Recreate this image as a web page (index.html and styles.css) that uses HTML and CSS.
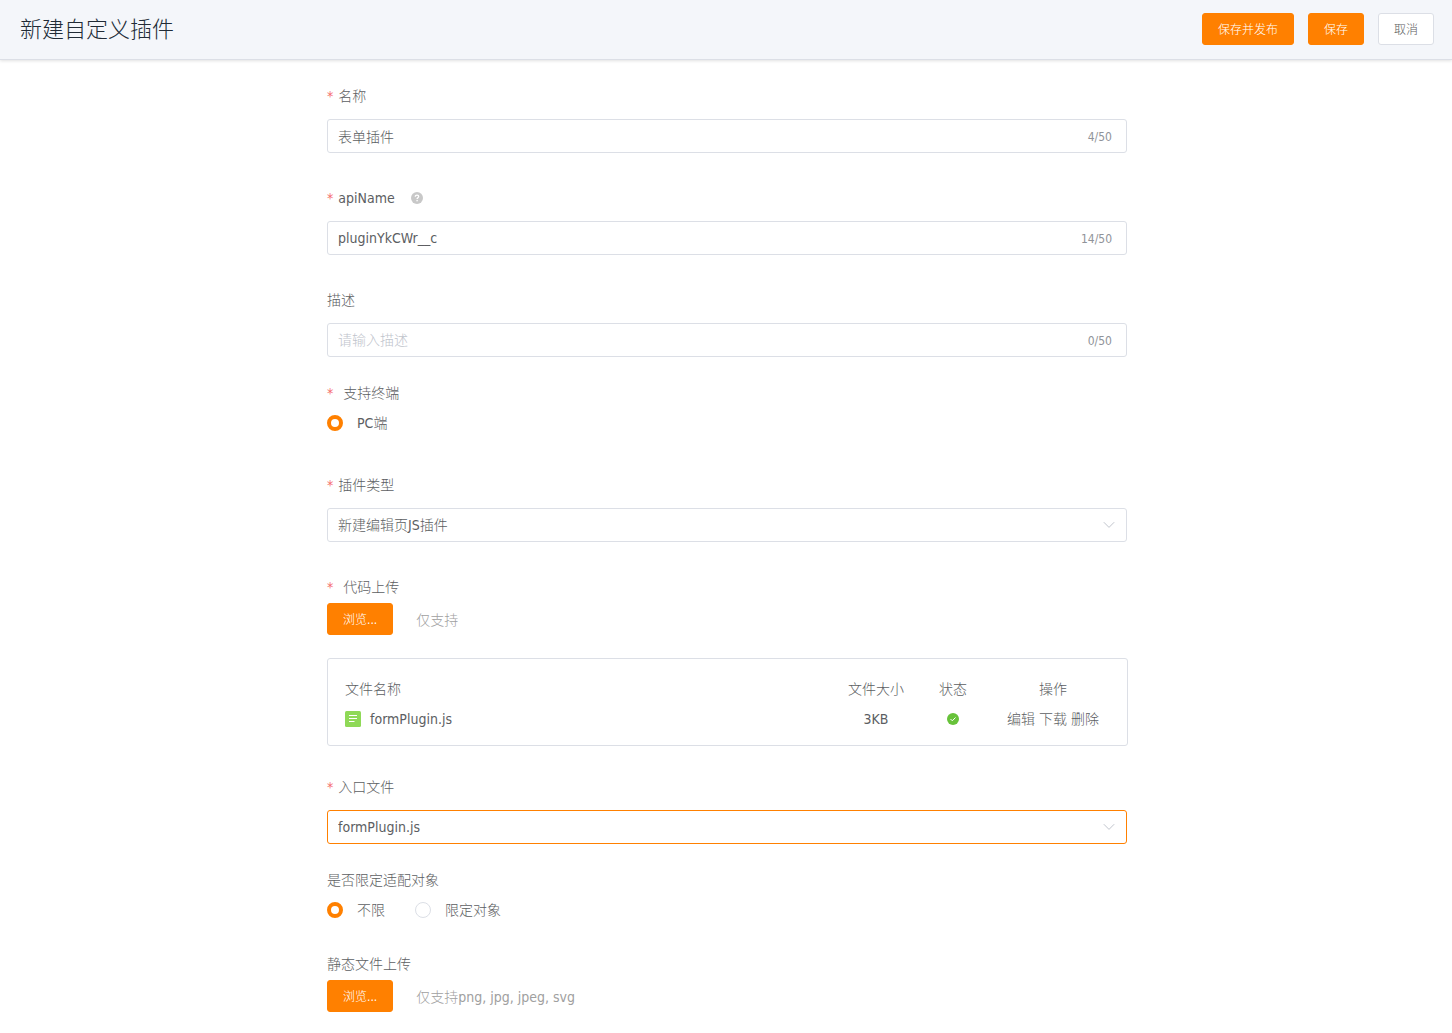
FILE: index.html
```html
<!DOCTYPE html>
<html lang="zh-CN">
<head>
<meta charset="utf-8">
<meta name="viewport" content="width=device-width, initial-scale=1">
<title>新建自定义插件</title>
<link rel="stylesheet" href="styles.css">
</head>
<body>
<header class="topbar">
  <h1 class="topbar-title">新建自定义插件</h1>
  <div class="topbar-actions">
    <button class="btn btn-primary" type="submit" form="plugin-form">保存并发布</button>
    <button class="btn btn-primary" type="button">保存</button>
    <button class="btn btn-plain" type="button">取消</button>
  </div>
</header>
<main class="page">
  <form class="form" id="plugin-form">
    <div class="field">
      <label class="label required" for="name">名称</label>
      <div class="box">
        <input class="control" id="name" type="text" maxlength="50" value="表单插件">
        <span class="counter">4/50</span>
      </div>
    </div>
    <div class="field">
      <div class="label-row">
        <label class="label required" for="api-name">apiName</label>
        <svg class="help" viewBox="0 0 12 12" role="img" aria-label="帮助">
          <circle cx="6" cy="6" r="6" fill="#c8c8c8"/>
          <path d="M4.3 4.8C4.3 3.7 5 3.1 6 3.1s1.7.6 1.7 1.5c0 1.1-1.6 1.2-1.6 2.4" fill="none" stroke="#fff" stroke-width="1.3"/>
          <rect x="5.4" y="7.9" width="1.4" height="1.4" fill="#fff"/>
        </svg>
      </div>
      <div class="box">
        <input class="control" id="api-name" type="text" maxlength="50" value="pluginYkCWr__c">
        <span class="counter">14/50</span>
      </div>
    </div>
    <div class="field field-close">
      <label class="label" for="desc">描述</label>
      <div class="box">
        <input class="control" id="desc" type="text" maxlength="50" placeholder="请输入描述">
        <span class="counter">0/50</span>
      </div>
    </div>
    <fieldset class="group">
      <legend class="label required required-wide">支持终端</legend>
      <div class="radios">
        <label class="choice"><input class="radio" type="radio" name="terminal" checked>PC端</label>
      </div>
    </fieldset>
    <div class="field">
      <label class="label required" for="type">插件类型</label>
      <div class="box box-select">
        <select class="control" id="type"><option>新建编辑页JS插件</option></select>
        <svg class="chevron" viewBox="0 0 12 8" aria-hidden="true"><path d="M.8 1.2 6 6.4l5.200-5.200" fill="none" stroke="#c0c4cc" stroke-width="1"/></svg>
      </div>
    </div>
    <section class="upload">
      <h2 class="label required required-wide">代码上传</h2>
      <div class="upload-row">
        <button class="btn btn-primary" type="button">浏览...</button>
        <span class="hint">仅支持</span>
      </div>
    </section>
    <div class="files">
      <table class="file-table">
        <thead>
          <tr><th class="col-name">文件名称</th><th class="col-size">文件大小</th><th class="col-state">状态</th><th class="col-ops">操作</th></tr>
        </thead>
        <tbody>
          <tr>
            <td class="col-name">
              <div class="file">
                <svg class="file-icon" viewBox="0 0 16 16" aria-hidden="true"><rect width="16" height="16" rx="1.500" fill="#8fd957"/><path d="M4 4.500h8M4 7.500h8M4 10.500h5.500" stroke="#fff" stroke-width="1"/></svg>
                formPlugin.js
              </div>
            </td>
            <td>3KB</td>
            <td><svg class="state-icon" viewBox="0 0 12 12" role="img" aria-label="成功"><circle cx="6" cy="6" r="6" fill="#67c23a"/><path d="m3.500 6 1.800 1.800 3.200-3.300" fill="none" stroke="#fff" stroke-width="1"/></svg></td>
            <td><a class="op" href="#edit">编辑</a> <a class="op" href="#download">下载</a> <a class="op" href="#delete">删除</a></td>
          </tr>
        </tbody>
      </table>
    </div>
    <div class="field field-close">
      <label class="label required" for="entry">入口文件</label>
      <div class="box box-select box-active">
        <select class="control" id="entry"><option>formPlugin.js</option></select>
        <svg class="chevron" viewBox="0 0 12 8" aria-hidden="true"><path d="M.8 1.200 6 6.400l5.200-5.200" fill="none" stroke="#c0c4cc" stroke-width="1"/></svg>
      </div>
    </div>
    <fieldset class="group group-close">
      <legend class="label">是否限定适配对象</legend>
      <div class="radios">
        <label class="choice"><input class="radio" type="radio" name="scope" checked>不限</label>
        <label class="choice"><input class="radio" type="radio" name="scope">限定对象</label>
      </div>
    </fieldset>
    <section class="upload">
      <h2 class="label">静态文件上传</h2>
      <div class="upload-row">
        <button class="btn btn-primary" type="button">浏览...</button>
        <span class="hint">仅支持png, jpg, jpeg, svg</span>
      </div>
    </section>
  </form>
</main>
</body>
</html>
```
FILE: styles.css
```css
* { box-sizing: border-box; }

body {
  margin: 0;
  background: #fff;
  color: #5c5e62;
  font: 300 14px/22px "DejaVu Sans Condensed", "Noto Sans CJK SC", sans-serif;
}

button, input, select { font: inherit; color: inherit; }

.topbar {
  display: flex;
  align-items: center;
  justify-content: space-between;
  height: 60px;
  padding: 0 18px 1px 20px;
  background: #f4f6fa;
  border-bottom: 1px solid #dcdfe6;
  box-shadow: 0 1px 3px rgba(0, 0, 0, .12);
}
.topbar-title { margin: 0; padding-top: 2px; font-size: 22px; font-weight: 300; line-height: 32px; color: #212b36; }
.topbar-actions { display: flex; gap: 14px; }

.btn {
  height: 32px;
  padding: 2px 15px 0;
  border: 1px solid #ff8000;
  border-radius: 3px;
  font-size: 12px;
  line-height: 20px;
}
.btn-primary { background: #ff8000; color: #fff; }
.btn-plain { background: #fff; border-color: #dcdfe6; }

.page { padding: 25px 0 21px 2px; }
.form { max-width: 800px; margin: 0 auto; }

.field { margin-bottom: 34px; }
.field-close { margin-bottom: 25px; }
.label { display: block; margin: 0; padding: 0; font-size: 14px; font-weight: 300; line-height: 22px; }
.required::before { content: "*"; margin-right: 5px; color: #f56c6c; }
.required-wide::before { margin-right: 10px; }
.label-row { display: flex; align-items: center; gap: 16px; }
.help { width: 12px; height: 12px; }

.box {
  display: flex;
  align-items: center;
  height: 34px;
  margin-top: 12px;
  padding: 0 14px 0 10px;
  border: 1px solid #dcdfe6;
  border-radius: 3px;
}
.box-active { border-color: #ff8000; }
.control {
  flex: 1;
  min-width: 0;
  height: 32px;
  padding: 0;
  border: 0;
  outline: 0;
  background: transparent;
}
.control::placeholder { color: #c0c4cc; opacity: 1; }
.counter { padding-top: 2px; font-size: 12px; color: #909399; }

.box-select { display: grid; padding: 0 11px 0 10px; }
.box-select .control { grid-area: 1 / 1; appearance: none; }
.chevron { grid-area: 1 / 1; justify-self: end; width: 12px; height: 8px; pointer-events: none; }

.group { margin: 0 0 40px; padding: 0; border: 0; }
.group-close { margin-bottom: 32px; }
.radios { display: flex; gap: 30px; margin-top: 8px; }
.choice { display: flex; align-items: center; gap: 14px; }
.radio {
  appearance: none;
  width: 16px;
  height: 16px;
  margin: 0;
  border: 1px solid #dcdfe6;
  border-radius: 50%;
  background: #fff;
}
.radio:checked { border: 4px solid #ff8000; }

.upload-row { display: flex; align-items: center; gap: 23px; margin-top: 5px; }
.hint { color: #a0a0a0; padding-top: 2px; }

.files {
  margin: 23px -1px 30px 0;
  padding: 15px 11px 11px 17px;
  border: 1px solid #dcdfe6;
  border-radius: 3px;
}
.file-table { width: 100%; table-layout: fixed; border-collapse: collapse; text-align: center; }
.file-table th, .file-table td { height: 30px; padding: 0; font-weight: 300; }
.file-table .col-name { text-align: left; }
.col-size { width: 80px; }
.col-state { width: 74px; }
.col-ops { width: 126px; }
.file { display: flex; align-items: center; gap: 9px; }
.file-icon { width: 16px; height: 16px; }
.state-icon { display: block; width: 12px; height: 12px; margin: 0 auto; }
.op { color: inherit; text-decoration: none; }
```
